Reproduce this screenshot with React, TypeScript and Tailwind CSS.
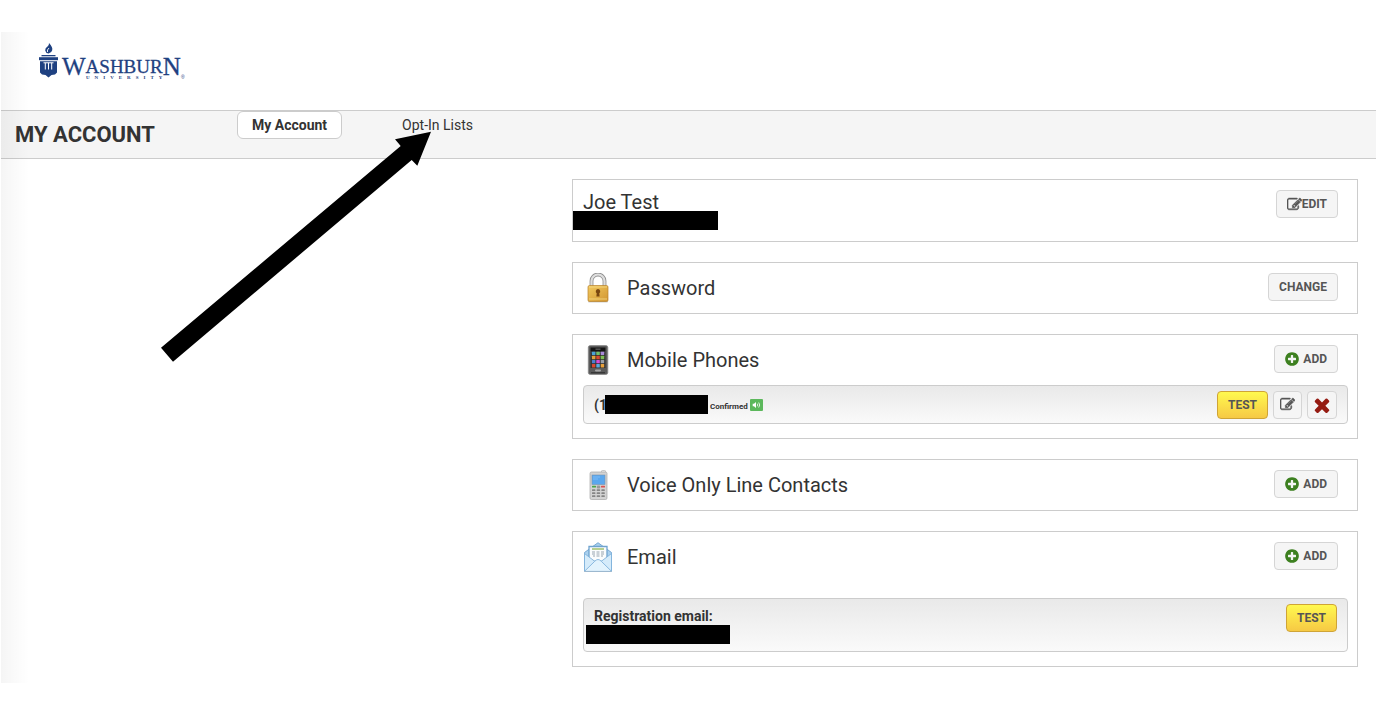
import React from "react";

const EDIT_PATH =
  "M888 1184l116-116-152-152-116 116v56h96v96h56zm440-720q-16-16-33 1l-350 350q-17 17-1 33t33-1l350-350q17-17 1-33zm80 594v190q0 119-84.5 203.5t-203.5 84.5h-832q-119 0-203.5-84.5t-84.5-203.5v-832q0-119 84.5-203.5t203.5-84.5h832q63 0 117 25 15 7 18 23 3 17-9 29l-49 49q-14 14-32 8-23-6-45-6h-832q-66 0-113 47t-47 113v832q0 66 47 113t113 47h832q66 0 113-47t47-113v-126q0-13 9-22l64-64q15-15 35-7t20 29zm-96-738l288 288-672 672h-288v-288zm444 132l-92 92-288-288 92-92q28-28 68-28t68 28l152 152q28 28 28 68t-28 68z";
const TIMES_PATH =
  "M1490 1322q0 40-28 68l-136 136q-28 28-68 28t-68-28l-294-294-294 294q-28 28-68 28t-68-28l-136-136q-28-28-28-68t28-68l294-294-294-294q-28-28-28-68t28-68l136-136q28-28 68-28t68 28l294 294 294-294q28-28 68-28t68 28l136 136q28 28 28 68t-28 68l-294 294 294 294q28 28 28 68z";
const PLUS_PATH =
  "M1344 960v-128q0-26-19-45t-45-19h-256v-256q0-26-19-45t-45-19h-128q-26 0-45 19t-19 45v256h-256q-26 0-45 19t-19 45v128q0 26 19 45t45 19h256v256q0 26 19 45t45 19h128q26 0 45-19t19-45v-256h256q26 0 45-19t19-45zm320-64q0 209-103 385.5t-279.5 279.5-385.5 103-385.5-103-279.5-279.5-103-385.5 103-385.5 279.5-279.5 385.5-103 385.5 103 279.5 279.5 103 385.5z";

function Glyph({ path, className, weight = 0 }: { path: string; className: string; weight?: number }) {
  return (
    <svg
      viewBox="0 0 1792 1792"
      className={className}
      fill="currentColor"
      stroke="currentColor"
      strokeWidth={weight}
      aria-hidden="true"
    >
      <path d={path} />
    </svg>
  );
}

const buttonBase =
  "flex h-7 shrink-0 items-center justify-center rounded border text-xs font-bold text-[#555]";
const grayButton = "border-[#d5d5d5] bg-[#f5f5f5]";

function AddButton({ label }: { label: string }) {
  return (
    <button
      type="button"
      aria-label={label}
      className={`${buttonBase} ${grayButton} gap-[3px] pr-[10px] pl-[9px]`}
    >
      <Glyph path={PLUS_PATH} className="size-4 text-[#3d8020]" />
      ADD
    </button>
  );
}

function TestButton() {
  return (
    <button
      type="button"
      className={`${buttonBase} border-[#cfa436] bg-linear-to-b from-[#fff94f] to-[#f6c944] px-[10px]`}
    >
      TEST
    </button>
  );
}

function Card({ children }: { children: React.ReactNode }) {
  return <section className="relative border border-[#ccc] bg-white">{children}</section>;
}

function CardHeader({
  icon,
  title,
  action,
}: {
  icon: React.ReactNode;
  title: string;
  action: React.ReactNode;
}) {
  return (
    <div className="flex h-[50px] items-start pt-[10px] pr-[19px] pl-[10px]">
      <div className="mr-[14px] size-[30px] shrink-0">{icon}</div>
      <h2 className="flex-1 text-xl leading-[30px]">{title}</h2>
      {action}
    </div>
  );
}

const rowStyle =
  "mr-[9px] mb-[14px] ml-[10px] flex rounded border border-[#ccc] bg-linear-to-b from-[#e9e9e9] to-[#fafafa] px-[10px]";

function LockIcon() {
  return (
    <svg viewBox="0 0 30 30" className="size-full" aria-hidden="true">
      <defs>
        <linearGradient id="brass" x1="0" x2="1" y1="0" y2="1">
          <stop offset="0" stopColor="#f2c95e" />
          <stop offset="1" stopColor="#d29632" />
        </linearGradient>
      </defs>
      <path d="M8.500 14V8a6.500 6.500 0 0 1 13 0v6" fill="none" stroke="#8f8f8f" strokeWidth="3.800" />
      <path d="M8.500 14V8a6.500 6.500 0 0 1 13 0v6" fill="none" stroke="#dedede" strokeWidth="2.200" />
      <rect x="5" y="28" width="20" height="1.500" rx="1" fill="#cfcfcf" />
      <rect x="5" y="12.500" width="20" height="16" rx="1.500" fill="url(#brass)" stroke="#b9832b" strokeWidth=".7" />
      <path d="M6 14h18M6 26h18" stroke="#f7dd8c" strokeWidth=".8" />
      <path d="M15 16a2.400 2.400 0 0 1 1.300 4.300l.3 3.200h-3.200l.3-3.200A2.400 2.400 0 0 1 15 16z" fill="#79460f" />
    </svg>
  );
}

const APP_COLORS = [
  "#4aa3d8", "#6fc06a", "#a98bd8",
  "#e0a43c", "#d8482f", "#7fbf54",
  "#4a7fd0", "#d94bd8", "#9aa0a8",
  "#d8482f", "#5aa9e0", "#e8a13c",
];

function SmartphoneIcon() {
  return (
    <svg viewBox="0 0 30 30" className="size-full" aria-hidden="true">
      <rect x="5.300" y=".5" width="19.500" height="29" rx="2" fill="#5a5a5a" stroke="#8c8c8c" strokeWidth=".8" />
      <rect x="7.500" y="2.500" width="15" height="3.500" fill="#141414" />
      <rect x="7.500" y="6" width="15" height="17" fill="#303030" />
      <rect x="12.500" y="3.700" width="5" height=".8" fill="#888" />
      {APP_COLORS.map((color, i) => (
        <rect
          key={i}
          x={8.900 + (i % 3) * 4.400}
          y={6.700 + Math.floor(i / 3) * 4.100}
          width="3.500"
          height="3.400"
          rx=".5"
          fill={color}
        />
      ))}
      <rect x="12" y="24.500" width="6" height="2" rx="1" fill="#a5a5a5" />
      <path d="M8 27.700h14" stroke="#353535" strokeWidth="1.200" />
    </svg>
  );
}

function HandsetIcon() {
  return (
    <svg viewBox="0 0 30 30" className="size-full" aria-hidden="true">
      <rect x="18.500" y=".4" width="4" height="5" rx="1" fill="#f2f2f2" stroke="#aaa" strokeWidth=".7" />
      <rect x="7" y="2" width="17" height="27.500" rx="1.500" fill="#d3d3d3" stroke="#a6a6a6" strokeWidth=".7" />
      <rect x="9" y="5" width="13" height="9.500" fill="#5aa7ee" stroke="#7793ae" strokeWidth=".6" />
      <path d="M10 7h7M10 9h5" stroke="#8cc6fa" strokeWidth=".7" />
      <rect x="9" y="15.700" width="4" height="1.800" rx=".6" fill="#47a447" />
      <rect x="18" y="15.700" width="4" height="1.800" rx=".6" fill="#d9534f" />
      <rect x="13.800" y="15.500" width="3.400" height="3" rx="1" fill="#999" />
      {[19.200, 22.200, 25.200].map((y) =>
        [9, 13.700, 18.400].map((x) => (
          <rect key={`${x}-${y}`} x={x} y={y} width="3.400" height="1.800" rx=".5" fill="#858585" />
        )),
      )}
    </svg>
  );
}

function EnvelopeIcon() {
  return (
    <svg viewBox="0 0 30 30" className="size-full" aria-hidden="true">
      <path d="M1.500 10.500L15 .7l13.500 9.800v18.500h-27z" fill="#a9d0ee" stroke="#6fa3cf" strokeWidth=".9" />
      <path d="M6 4.500h18v15H6z" fill="#fafcfd" stroke="#6fa3cf" strokeWidth="1.300" />
      <path d="M9 7h12" stroke="#92b755" strokeWidth="1.300" />
      <path
        d="M9 10h3M13.500 10h3M18 10h3M9 12h3M13.500 12h3M18 12h3M10 14h2M13.500 14h3M18 14h2"
        stroke="#98a5b0"
        strokeWidth="1"
      />
      <path d="M1.500 11.500L12 19.500h6l10.500-8v17.700h-27z" fill="#d5ebfa" stroke="#80b2db" strokeWidth=".9" />
      <path d="M2 28.800l9.500-9.300Q15 15.500 18.500 19.500l9.500 9.300" fill="#e3f3fd" stroke="#80b2db" strokeWidth=".9" />
      <path d="M1 29.500h28" stroke="#9db6ca" strokeWidth=".8" />
    </svg>
  );
}

function SpeakerBadge() {
  return (
    <svg viewBox="0 0 13 12" className="h-3 w-[13px]" role="img" aria-label="Voice enabled">
      <rect width="13" height="12" rx="1" fill="#5cb85c" />
      <path d="M2.700 4.800h1.300l2-1.700v5.800l-2-1.700H2.700z" fill="#fff" />
      <path d="M7.300 4.700q1 1.300 0 2.600M8.700 3.500q2 2.500 0 5" fill="none" stroke="#fff" strokeWidth=".8" />
    </svg>
  );
}

function Logo() {
  return (
    <svg viewBox="0 0 150 40" className="h-10 w-[150px]" role="img" aria-label="Washburn University">
      <g fill="#1f4181">
        <path d="M11 0q4 4.200 3.200 7.200-.6 2.600-3.600 3.300-3-.6-3.400-3.100Q7 5 9.500 3.600 11.200 2.300 11 0z" />
        <path d="M9.500 9q-.8-2 1.500-4" fill="none" stroke="#fff" strokeWidth=".9" />
        <path d="M3.500 12h14v1.300h-14z" />
        <path d="M1 14.200h19v3H1z" />
        <path d="M2 18.200h17v11.300l-2 2-3.500.6-3 2.400-3-2.400-3.500-.6-2-2z" />
        <path d="M5.500 19.800h10M7.300 19.800v6.700M10.500 19.800v6.700M13.700 19.800v6.700" fill="none" stroke="#fff" strokeWidth="1" />
        <text x="24" y="32" fontFamily="Liberation Serif, serif" stroke="#1f4181" strokeWidth=".3">
          <tspan fontSize="25">W</tspan>
          <tspan fontSize="19" dy="-2">ASHBUR</tspan>
          <tspan fontSize="25" dy="2">N</tspan>
        </text>
        <text x="48" y="36" fontFamily="Liberation Serif, serif" fontSize="5" fontWeight="bold">
          {"U\u2003N\u2003I\u2003V\u2003E\u2003R\u2003S\u2003I\u2003T\u2003Y"}
        </text>
        <text x="143" y="36" fontFamily="Liberation Sans, sans-serif" fontSize="5">
          ®
        </text>
      </g>
    </svg>
  );
}

export default function App() {
  return (
    <div className="min-h-screen bg-white pt-8 pr-4 pb-5 pl-px font-[Roboto,sans-serif] text-[#333]">
      <div className="relative">
        <header className="h-[78px] pt-[11px] pl-[37px]">
          <Logo />
        </header>

        <div className="flex h-[49px] items-start border-y border-[#ccc] bg-[#f5f5f5]">
          <h1 className="w-[236px] pl-[14px] text-[22px] leading-[48px] font-bold">MY ACCOUNT</h1>
          <nav className="flex gap-11 text-sm">
            <a
              href="#account"
              className="flex h-7 items-center rounded-md border border-[#ccc] bg-white px-[14px] font-bold"
            >
              My Account
            </a>
            <a href="#lists" className="flex h-7 items-center px-4">
              Opt-In Lists
            </a>
          </nav>
        </div>

        <main className="grid grid-cols-[571px_1fr] pt-5 pr-[18px] pb-4">
          <div />
          <div className="flex flex-col gap-5">
            <Card>
              <div className="flex h-[61px] items-start justify-between pt-[10px] pr-[19px] pl-[10px]">
                <h2 className="text-xl leading-6">Joe Test</h2>
                <button type="button" className={`${buttonBase} ${grayButton} px-[10px]`}>
                  <Glyph path={EDIT_PATH} className="size-[15px]" weight={60} />
                  EDIT
                </button>
              </div>
              <div className="absolute top-[31px] left-0 h-[19px] w-[145px] bg-black" />
            </Card>

            <Card>
              <CardHeader
                icon={<LockIcon />}
                title="Password"
                action={
                  <button type="button" className={`${buttonBase} ${grayButton} px-[10px]`}>
                    CHANGE
                  </button>
                }
              />
            </Card>

            <Card>
              <CardHeader
                icon={<SmartphoneIcon />}
                title="Mobile Phones"
                action={<AddButton label="Add mobile phone" />}
              />
              <div className={`${rowStyle} h-[39px] items-center justify-between`}>
                <div className="flex items-center">
                  <span className="text-sm font-bold">(1</span>
                  <span className="mr-0.5 -ml-0.5 h-[19px] w-[103px] bg-black" />
                  <span className="mr-0.5 pt-1 text-[8px] font-bold">Confirmed</span>
                  <SpeakerBadge />
                </div>
                <div className="flex gap-[5px]">
                  <TestButton />
                  <button
                    type="button"
                    aria-label="Edit phone"
                    className={`${buttonBase} ${grayButton} w-[29px]`}
                  >
                    <Glyph path={EDIT_PATH} className="size-[15px]" weight={60} />
                  </button>
                  <button
                    type="button"
                    aria-label="Delete phone"
                    className={`${buttonBase} ${grayButton} w-[30px]`}
                  >
                    <Glyph path={TIMES_PATH} className="size-[22px] text-[#951b12]" />
                  </button>
                </div>
              </div>
            </Card>

            <Card>
              <CardHeader
                icon={<HandsetIcon />}
                title="Voice Only Line Contacts"
                action={<AddButton label="Add voice only line" />}
              />
            </Card>

            <Card>
              <CardHeader
                icon={<EnvelopeIcon />}
                title="Email"
                action={<AddButton label="Add email" />}
              />
              <div className={`${rowStyle} mt-4 h-[54px] items-start justify-between pt-[5px]`}>
                <div>
                  <p className="pt-1 text-sm leading-[17px] font-bold">Registration email:</p>
                  <div className="-ml-2 h-[19px] w-36 bg-black" />
                </div>
                <TestButton />
              </div>
            </Card>
          </div>
        </main>

        <div className="pointer-events-none absolute inset-y-0 left-0 w-7 bg-linear-to-r from-black/4 to-transparent" />
        <svg
          viewBox="160 130 274 234"
          className="pointer-events-none absolute top-[98px] left-[159px] h-[234px] w-[274px]"
          aria-hidden="true"
        >
          <path d="M431 131.700L395 139.300l5.700 6.700L161 347.700l12 14L411.700 160l5.600 5.700z" />
        </svg>
      </div>
    </div>
  );
}
